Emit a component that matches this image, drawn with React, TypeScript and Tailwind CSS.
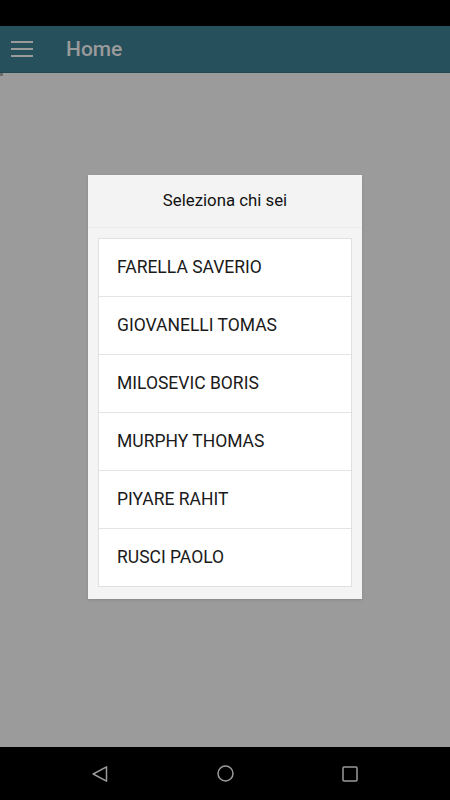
const people = [
  'FARELLA SAVERIO',
  'GIOVANELLI TOMAS',
  'MILOSEVIC BORIS',
  'MURPHY THOMAS',
  'PIYARE RAHIT',
  'RUSCI PAOLO',
];

const App = () => {
  return (
    <div className="h-[800px] w-[450px] flex flex-col bg-[#9b9b9b] font-['Roboto',sans-serif] overflow-hidden">
      {/* status bar */}
      <div className="h-[26px] bg-black shrink-0" />

      {/* toolbar (dimmed by the dialog scrim) */}
      <div className="h-[47px] shrink-0 flex items-center bg-[#26505c] border-b border-[#1f4853]">
        <div className="w-[22px] ml-[11px] flex flex-col gap-[5px]">
          <span className="h-[2px] bg-[#9a9a9a]" />
          <span className="h-[2px] bg-[#9a9a9a]" />
          <span className="h-[2px] bg-[#9a9a9a]" />
        </div>
        <span className="ml-[33px] text-[21px] font-medium text-[#9a9a9a] leading-none">Home</span>
      </div>

      {/* content */}
      <div className="flex-1 flex flex-col">
        <div className="w-[3px] h-[3px] bg-[#6b6b6b]" />
        <div className="mt-[99px] mx-auto w-[274px] bg-[#f4f4f4] shadow-sm">
          <div className="h-[53px] flex items-center justify-center bg-[#f3f3f3] border-b border-[#ececec] text-[16.8px] text-[#111]">
            Seleziona chi sei
          </div>
          <div className="px-[10px] pt-[10px] pb-[12px]">
            <ul className="border border-[#e0e0e0] bg-white">
              {people.map((name, i) => (
                <li
                  key={name}
                  className={
                    i < people.length - 1
                      ? 'h-[58px] flex items-center pl-[18px] text-[17.5px] text-[#1a1a1a] border-b border-[#e4e4e4]'
                      : 'h-[57px] flex items-center pl-[18px] text-[17.5px] text-[#1a1a1a]'
                  }
                >
                  {name}
                </li>
              ))}
            </ul>
          </div>
        </div>
      </div>

      {/* navigation bar */}
      <div className="h-[53px] shrink-0 bg-black flex items-center justify-between px-[92px]">
        <svg width="16" height="16" viewBox="0 0 16 16" fill="none" stroke="#9a9a9a" strokeWidth="1.5" strokeLinejoin="round">
          <path d="M14.5 0.8 L1.2 8 L14.5 15.2 Z" />
        </svg>
        <svg width="17" height="17" viewBox="0 0 17 17" fill="none" stroke="#9a9a9a" strokeWidth="1.5">
          <circle cx="8.5" cy="8.5" r="7.5" />
        </svg>
        <svg width="16" height="16" viewBox="0 0 16 16" fill="none" stroke="#9a9a9a" strokeWidth="1.5" strokeLinejoin="round">
          <rect x="1" y="1" width="14" height="14" rx="1" />
        </svg>
      </div>
    </div>
  );
};

export default App;
